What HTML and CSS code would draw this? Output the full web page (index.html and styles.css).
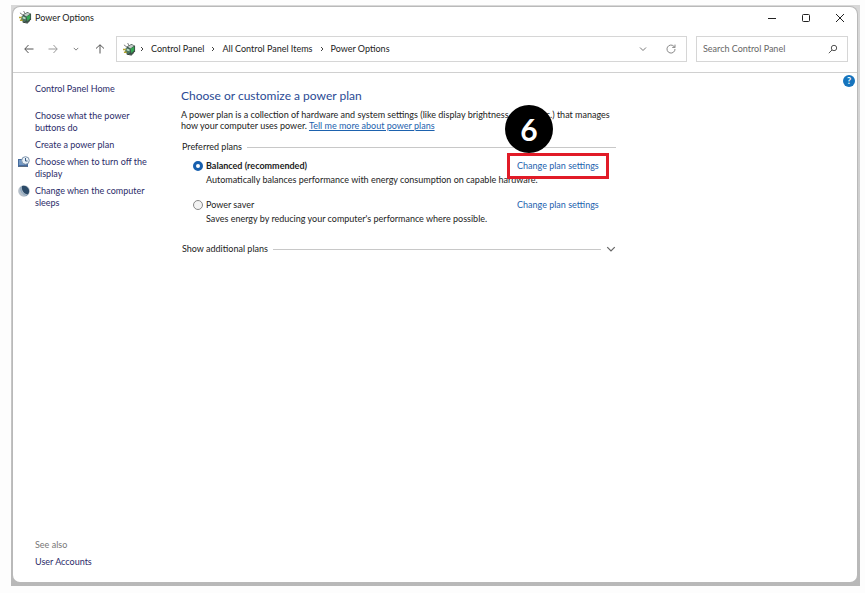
FILE: index.html
```html
<!DOCTYPE html>
<html lang="en">
<head>
<meta charset="utf-8">
<title>Power Options</title>
<link rel="stylesheet" href="styles.css">
</head>
<body>
<svg class="defs" aria-hidden="true">
  <symbol id="battery" viewBox="0 0 14 14">
    <path d="M1 2l4 3M5 0l2 4" stroke="#777" stroke-width="1" fill="none"/>
    <path d="M4 4l5-3 4 2v6l-4 4-5-2z" fill="#3d5148"/>
    <path d="M5 4l4-2 3 1-4 3z" fill="#c3ccc8"/>
    <path d="M8 6l4-2v4l-3 3z" fill="#35a853"/>
    <path d="M3 5l4 1 1 4-3 2-3-2z" fill="#4b7560"/>
    <path d="M4 6l3 1v2L4 8z" fill="#b9dcc5"/>
    <path d="M0 7h3M1 10h3" stroke="#b3a32c" stroke-width="1.5"/>
    <path d="M4 12l5 1 3-3" stroke="#26332d" fill="none"/>
  </symbol>
  <symbol id="chevron" viewBox="0 0 8 8"><path d="M1 2.5l3 3 3-3" fill="none" stroke="currentColor"/></symbol>
  <symbol id="next" viewBox="0 0 4 8"><path d="M1 2l2 2-2 2" fill="none" stroke="currentColor"/></symbol>
</svg>
<div class="frame">
<div class="window">
  <header class="titlebar">
    <svg class="app-icon"><use href="#battery"/></svg>
    <span class="title">Power Options</span>
    <div class="controls">
      <button aria-label="Minimize"><svg viewBox="0 0 10 10"><path d="M1 5.5h8"/></svg></button>
      <button aria-label="Maximize"><svg viewBox="0 0 10 10"><rect x="1.5" y="1.5" width="7" height="7" rx="1"/></svg></button>
      <button aria-label="Close"><svg viewBox="0 0 10 10"><path d="M1 1l8 8M9 1L1 9"/></svg></button>
    </div>
  </header>
  <nav class="toolbar">
    <div class="history">
      <button aria-label="Back"><svg viewBox="0 0 10 10"><path d="M9.500 5H.8M4.500 1L.8 5l3.700 4"/></svg></button>
      <button class="dim" aria-label="Forward"><svg viewBox="0 0 10 10"><path d="M.5 5h8.700M5.500 1l3.700 4-3.700 4"/></svg></button>
      <button class="small" aria-label="Recent locations"><svg><use href="#chevron"/></svg></button>
      <button aria-label="Up"><svg viewBox="0 0 10 10"><path d="M5 9.500V.8M1 4.500L5 .8l4 3.700"/></svg></button>
    </div>
    <div class="address">
      <svg class="app-icon"><use href="#battery"/></svg>
      <svg class="sep"><use href="#next"/></svg>
      <a href="#">Control Panel</a>
      <svg class="sep"><use href="#next"/></svg>
      <a href="#">All Control Panel Items</a>
      <svg class="sep"><use href="#next"/></svg>
      <a href="#">Power Options</a>
      <div class="address-tools">
        <button aria-label="Previous locations"><svg class="down"><use href="#chevron"/></svg></button>
        <button aria-label="Refresh"><svg viewBox="0 0 10 10"><path d="M9 5a4 4 0 1 1-1.200-2.800L9 3.400M9 .6v2.800H6.200"/></svg></button>
      </div>
    </div>
    <label class="search">
      <input type="text" placeholder="Search Control Panel" aria-label="Search Control Panel">
      <svg viewBox="0 0 10 10"><circle cx="6" cy="4" r="2.700"/><path d="M4 6L.8 9.200"/></svg>
    </label>
  </nav>
  <div class="content">
    <aside class="sidebar">
      <a class="home" href="#">Control Panel Home</a>
      <ul>
        <li><a href="#">Choose what the power buttons do</a></li>
        <li><a href="#">Create a power plan</a></li>
        <li>
          <svg viewBox="0 0 12 12"><path d="M0 3h10v8H0z" fill="#466b9d"/><path d="M1 4h5v5H1z" fill="#7298c4"/><path d="M1 10.500h8" stroke="#5d6d80"/><circle cx="7.500" cy="4.500" r="3.800" fill="#e9f1f8" stroke="#7d93ab"/><path d="M7.500 2v3h2" fill="none" stroke="#37587f"/></svg>
          <a href="#">Choose when to turn off the display</a>
        </li>
        <li>
          <svg viewBox="0 0 12 12"><circle cx="6" cy="6" r="5.800" fill="#b4bec8"/><path d="M4 1a5.500 5.500 0 0 1 6 8.500C6 9.500 3 5 4 1z" fill="#2b4a68"/><path d="M3 2C2 6 5 10 9 10.500" fill="none" stroke="#7fa0bd"/></svg>
          <a href="#">Change when the computer sleeps</a>
        </li>
      </ul>
      <div class="see-also">
        <p>See also</p>
        <a href="#">User Accounts</a>
      </div>
    </aside>
    <main>
      <h1>Choose or customize a power plan</h1>
      <p class="intro">A power plan is a collection of hardware and system settings (like display brightness, sleep, etc.) that manages<br>how your computer uses power. <a href="#">Tell me more about power plans</a></p>
      <section>
        <h2 class="group">Preferred plans</h2>
        <div class="plan">
          <input type="radio" name="plan" id="balanced" checked>
          <label for="balanced"><b>Balanced (recommended)</b></label>
          <span class="callout"><a href="#">Change plan settings</a><span class="badge">6</span></span>
          <p>Automatically balances performance with energy consumption on capable hardware.</p>
        </div>
        <div class="plan">
          <input type="radio" name="plan" id="saver">
          <label for="saver">Power saver</label>
          <a href="#">Change plan settings</a>
          <p>Saves energy by reducing your computer's performance where possible.</p>
        </div>
      </section>
      <button class="group more">Show additional plans<svg><use href="#chevron"/></svg></button>
    </main>
    <button class="help" aria-label="Help">?</button>
  </div>
</div>
</div>
</body>
</html>
```
FILE: styles.css
```css
*, ::before, ::after { box-sizing: border-box; margin: 0; padding: 0; }
body {
  min-height: 100vh;
  display: flex;
  padding: 5px 5px 7px 11px;
  background: #fdfdfd;
  color: #222;
  font: 9px/12px Lato, "Open Sans", sans-serif;
}
.defs { position: absolute; width: 0; height: 0; }
button { border: 0; background: none; font: inherit; color: inherit; display: flex; align-items: center; justify-content: center; }
a { color: #1d62ae; text-decoration: none; }
svg { flex: none; }
.frame {
  flex: 1;
  display: flex;
  padding: 2px 3px 4px 2px;
  background: linear-gradient(#d8d8d8, #c8c8c8 60%, #b8b8b8);
}
.window {
  flex: 1;
  min-width: 0;
  display: flex;
  flex-direction: column;
  background: #fff;
  border-radius: 7px;
  box-shadow: 0 0 0 1px #b9b9b9;
}
.app-icon { width: 13px; height: 13px; }
.titlebar { display: flex; align-items: center; height: 21px; padding-left: 6px; gap: 3px; }
.controls { display: flex; margin-left: auto; }
.controls button { width: 34px; height: 21px; }
.controls svg { width: 10px; height: 10px; fill: none; stroke: #222; }

.toolbar { display: flex; align-items: center; height: 45px; padding: 0 9px 2px; gap: 9px; border-bottom: 1px solid #d0d0d0; }
.history { display: flex; align-items: center; width: 85px; justify-content: space-between; color: #555; }
.history button { width: 14px; height: 20px; }
.history svg { width: 10px; height: 10px; fill: none; stroke: #555; }
.history .dim svg { stroke: #999; }
.history .small svg { width: 6px; height: 6px; }
.address, .search { display: flex; align-items: center; height: 26px; border: 1px solid #d6d6d6; }
.address { flex: 1; padding: 0 8px 0 6px; }
.address a { color: #222; }
.sep { width: 4px; height: 8px; margin: 0 7px; color: #444; }
.app-icon + .sep { margin-left: 4px; }
.address-tools { display: flex; gap: 14px; margin-left: auto; color: #777; }
.address-tools button { width: 14px; height: 20px; }
.address-tools svg { width: 10px; height: 10px; fill: none; stroke: #888; }
.address-tools .down { width: 8px; height: 8px; }
.search { width: 152px; padding: 0 9px 0 6px; }
.search input { flex: 1; min-width: 0; border: 0; outline: 0; background: none; font: inherit; }
.search input::placeholder { color: #666; opacity: 1; }
.search svg { width: 10px; height: 10px; fill: none; stroke: #555; }

.content { flex: 1; display: flex; position: relative; }
.sidebar { width: 146px; display: flex; flex-direction: column; padding: 10px 8px 14px 22px; }
.sidebar a { color: #2b2b69; }
.sidebar ul { list-style: none; display: flex; flex-direction: column; gap: 5px; margin-top: 15px; }
.sidebar li { position: relative; }
.sidebar li svg { position: absolute; left: -17px; top: 0; width: 12px; height: 12px; }
.see-also { margin-top: auto; }
.see-also p { color: #777; margin-bottom: 5px; }

main { flex: 0 1 457px; padding: 14px 0 0 22px; }
h1 { font-size: 12px; line-height: 18px; font-weight: 400; color: #2a4a94; }
.intro { margin-top: 4px; line-height: 11px; }
.intro a { text-decoration: underline; }
.group { display: flex; align-items: center; gap: 5px; width: 100%; padding-left: 1px; font-size: 9px; line-height: 12px; font-weight: 400; }
.group::after { content: ""; flex: 1; height: 1px; background: #c8c8c8; }
h2.group { margin-top: 10px; }
.plan { display: grid; grid-template-columns: 10px 1fr 99px; column-gap: 3px; row-gap: 2px; align-items: center; padding-left: 12px; margin-bottom: 13px; }
h2 + .plan { margin-top: 7px; }
.plan p { grid-column: 2 / -1; }
.plan input { appearance: none; width: 10px; height: 10px; border: 1px solid #888; border-radius: 50%; background: #f3f3f3; }
.plan input:checked { border: 3px solid #175fae; background: #fff; }
.callout { position: relative; }
.callout::before { content: ""; position: absolute; left: -10px; top: -7px; width: 102px; height: 26px; border: 3px solid #e11b27; pointer-events: none; }
.badge {
  position: absolute;
  left: -12px;
  bottom: 19px;
  width: 48px;
  height: 48px;
  border-radius: 50%;
  background: #000;
  color: #fff;
  font: 700 30px/48px Lato, sans-serif;
  text-align: center;
}
.more { margin-top: 18px; }
.more svg { order: 1; width: 10px; height: 10px; color: #666; }
.help { position: absolute; right: 2px; top: 2px; width: 12px; height: 12px; border-radius: 50%; background: #1674bd; color: #fff; font-weight: 700; }
```
